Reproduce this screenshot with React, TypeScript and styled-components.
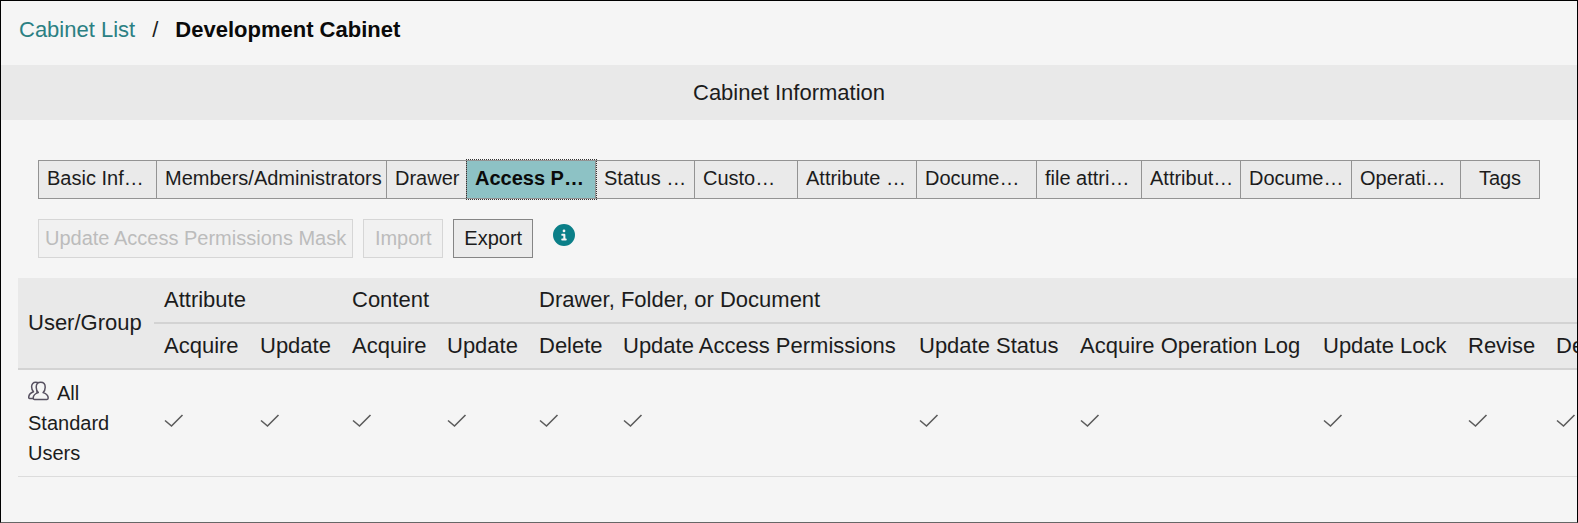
import React from "react";
import styled, { createGlobalStyle, css } from "styled-components";
import { FaCircleInfo } from "react-icons/fa6";

const GlobalStyle = createGlobalStyle`
  *, *::before, *::after { box-sizing: border-box; }
  body {
    margin: 0;
    background: #f5f5f5;
    color: #1c1c1c;
    font-family: "Liberation Sans", Arial, sans-serif;
    font-size: 22px;
  }
`;

const Page = styled.div`
  display: flex;
  flex-direction: column;
  min-height: 100vh;
  border: 1px solid #000;
  border-bottom-color: #666;
  overflow: hidden;
`;

const Breadcrumb = styled.nav`
  display: flex;
  align-items: center;
  gap: 17px;
  height: 64px;
  padding: 0 18px 6px;
  line-height: 28px;
`;

const CrumbLink = styled.a`
  color: #2b8083;
  text-decoration: none;
`;

const CrumbCurrent = styled.strong`
  color: #0a0a0a;
  font-weight: 700;
`;

const SectionTitle = styled.h1`
  margin: 0;
  padding: 14px 0 13px;
  background: #e9e9e9;
  font-size: 22px;
  font-weight: 400;
  line-height: 28px;
  text-align: center;
`;

const TabList = styled.div<{ $columns: number[] }>`
  display: grid;
  grid-template-columns: ${(p) => p.$columns.map((n) => `minmax(0, ${n}fr)`).join(" ")};
  margin: 40px 37px 20px;
`;

const Tab = styled.button<{ $active?: boolean; $centered?: boolean }>`
  height: 39px;
  margin: 0;
  padding: 0 0 3px 8px;
  border: 1px solid #939393;
  border-left-width: 0;
  background: #eaeaea;
  color: #1c1c1c;
  font-family: inherit;
  font-size: 20px;
  line-height: 24px;
  text-align: left;
  white-space: nowrap;
  &:first-child { border-left-width: 1px; }
  ${(p) => p.$centered && css`
    padding-left: 0;
    text-align: center;
  `}
  ${(p) => p.$active && css`
    position: relative;
    background: #8dc2c5;
    color: #0a0a0a;
    font-weight: 700;
    outline: 1px dotted #333;
  `}
`;

const Toolbar = styled.div`
  display: flex;
  align-items: flex-start;
  gap: 10px;
  padding: 0 37px;
`;

const ActionButton = styled.button`
  min-width: 80px;
  height: 39px;
  padding: 0 6px 2px;
  border: 1px solid #858585;
  background: #ebebeb;
  color: #1c1c1c;
  font-family: inherit;
  font-size: 20px;
  line-height: 24px;
  &:disabled {
    border-color: #d6d6d6;
    background: #f1f1f1;
    color: #bcbcbc;
  }
`;

const InfoButton = styled.button`
  display: flex;
  margin: 5px 0 0 10px;
  padding: 0;
  border: 0;
  background: none;
  color: #0b7f88;
  font-size: 22px;
`;

const TableScroller = styled.div`
  margin: 20px 0 44px 17px;
  overflow: hidden;
`;

const Table = styled.table`
  width: max-content;
  border-collapse: separate;
  border-spacing: 0;
  white-space: nowrap;
`;

const Column = styled.col<{ $width: number }>`
  width: ${(p) => p.$width}px;
`;

const HeadCell = styled.th`
  height: 46px;
  padding: 0 10px;
  border-bottom: 2px solid #d3d3d3;
  background: #e9e9e9;
  font-weight: 400;
  line-height: 28px;
  text-align: left;
`;

const Cell = styled.td`
  padding: 8px 10px 12px;
  border-bottom: 1px solid #dcdcdc;
`;

const GroupCell = styled.th`
  padding: 8px 10px;
  border-bottom: 1px solid #dcdcdc;
  font-size: 20px;
  font-weight: 400;
  line-height: 30px;
  text-align: left;
  white-space: normal;
`;

const GroupName = styled.div`
  width: min-content;
`;

const NoBreak = styled.span`
  white-space: nowrap;
`;

const CheckIcon = styled.svg`
  display: block;
  width: 20px;
  height: 14px;
  fill: none;
  stroke: #5c5c5c;
  stroke-width: 1.6;
`;

const GroupIcon = styled.svg`
  width: 21px;
  height: 20px;
  margin-right: 8px;
  vertical-align: -1px;
  fill: #f5f5f5;
  stroke: #565060;
  stroke-width: 1.5;
  stroke-linejoin: round;
`;

const tabs = [
  { label: "Basic Inf…", span: 119 },
  { label: "Members/Administrators", span: 230 },
  { label: "Drawer", span: 80 },
  { label: "Access P…", span: 129, active: true },
  { label: "Status …", span: 99 },
  { label: "Custo…", span: 103 },
  { label: "Attribute …", span: 119 },
  { label: "Docume…", span: 120 },
  { label: "file attri…", span: 105 },
  { label: "Attribut…", span: 99 },
  { label: "Docume…", span: 111 },
  { label: "Operati…", span: 109 },
  { label: "Tags", span: 79, centered: true },
];

const permissions = [
  { name: "Acquire", width: 96 },
  { name: "Update", width: 92 },
  { name: "Acquire", width: 95 },
  { name: "Update", width: 92 },
  { name: "Delete", width: 84 },
  { name: "Update Access Permissions", width: 296 },
  { name: "Update Status", width: 161 },
  { name: "Acquire Operation Log", width: 243 },
  { name: "Update Lock", width: 145 },
  { name: "Revise", width: 88 },
  { name: "Delete", width: 84 },
];

export default function App() {
  return (
    <>
      <GlobalStyle />
      <Page>
        <Breadcrumb aria-label="Breadcrumb">
          <CrumbLink href="#cabinets">Cabinet List</CrumbLink>
          <span>/</span>
          <CrumbCurrent>Development Cabinet</CrumbCurrent>
        </Breadcrumb>
        <SectionTitle>Cabinet Information</SectionTitle>
        <TabList role="tablist" $columns={tabs.map((tab) => tab.span)}>
          {tabs.map((tab, i) => (
            <Tab
              key={i}
              type="button"
              role="tab"
              aria-selected={!!tab.active}
              $active={tab.active}
              $centered={tab.centered}
            >
              {tab.label}
            </Tab>
          ))}
        </TabList>
        <Toolbar>
          <ActionButton type="button" disabled>Update Access Permissions Mask</ActionButton>
          <ActionButton type="button" disabled>Import</ActionButton>
          <ActionButton type="button">Export</ActionButton>
          <InfoButton type="button" aria-label="Information">
            <FaCircleInfo />
          </InfoButton>
        </Toolbar>
        <TableScroller>
          <Table>
            <colgroup>
              <Column $width={136} />
              {permissions.map((p, i) => (
                <Column key={i} $width={p.width} />
              ))}
            </colgroup>
            <thead>
              <tr>
                <HeadCell rowSpan={2} scope="col">User/Group</HeadCell>
                <HeadCell colSpan={2} scope="colgroup">Attribute</HeadCell>
                <HeadCell colSpan={2} scope="colgroup">Content</HeadCell>
                <HeadCell colSpan={7} scope="colgroup">Drawer, Folder, or Document</HeadCell>
              </tr>
              <tr>
                {permissions.map((p, i) => (
                  <HeadCell key={i} scope="col">{p.name}</HeadCell>
                ))}
              </tr>
            </thead>
            <tbody>
              <tr>
                <GroupCell scope="row">
                  <GroupName>
                    <NoBreak>
                      <GroupIcon viewBox="0 0 21 20" aria-hidden="true">
                        <path d="M5.500 10.800C4.200 9.500 3.600 7.800 3.600 5.800C3.600 3 5.300 1.300 7.700 1.300C10 1.300 11.500 3 11.500 5.800C11.500 8 10.500 9.500 9 10.800L9 17.400H1.500C.9 17.400.7 17 .7 16.500C.7 13 2.500 12 5.500 10.800Z" />
                        <path d="M10.300 11.600C9 10.300 8.200 8.500 8.200 6.200C8.200 3.200 10 1.300 12.700 1.300C15.400 1.300 17.200 3.200 17.200 6.200C17.200 8.500 16.400 10.300 15.100 11.600C18 12.500 20.200 13.500 20.200 17C20.200 18 19.800 18.400 19 18.400H6.400C5.600 18.400 5.200 18 5.200 17C5.200 13.500 7.300 12.500 10.300 11.600Z" />
                      </GroupIcon>
                      All
                    </NoBreak>{" "}
                    Standard Users
                  </GroupName>
                </GroupCell>
                {permissions.map((_, i) => (
                  <Cell key={i}>
                    <CheckIcon viewBox="0 0 20 14" role="img" aria-label="Allowed">
                      <path d="M1 6.500L7.500 12L18.500 1" />
                    </CheckIcon>
                  </Cell>
                ))}
              </tr>
            </tbody>
          </Table>
        </TableScroller>
      </Page>
    </>
  );
}
